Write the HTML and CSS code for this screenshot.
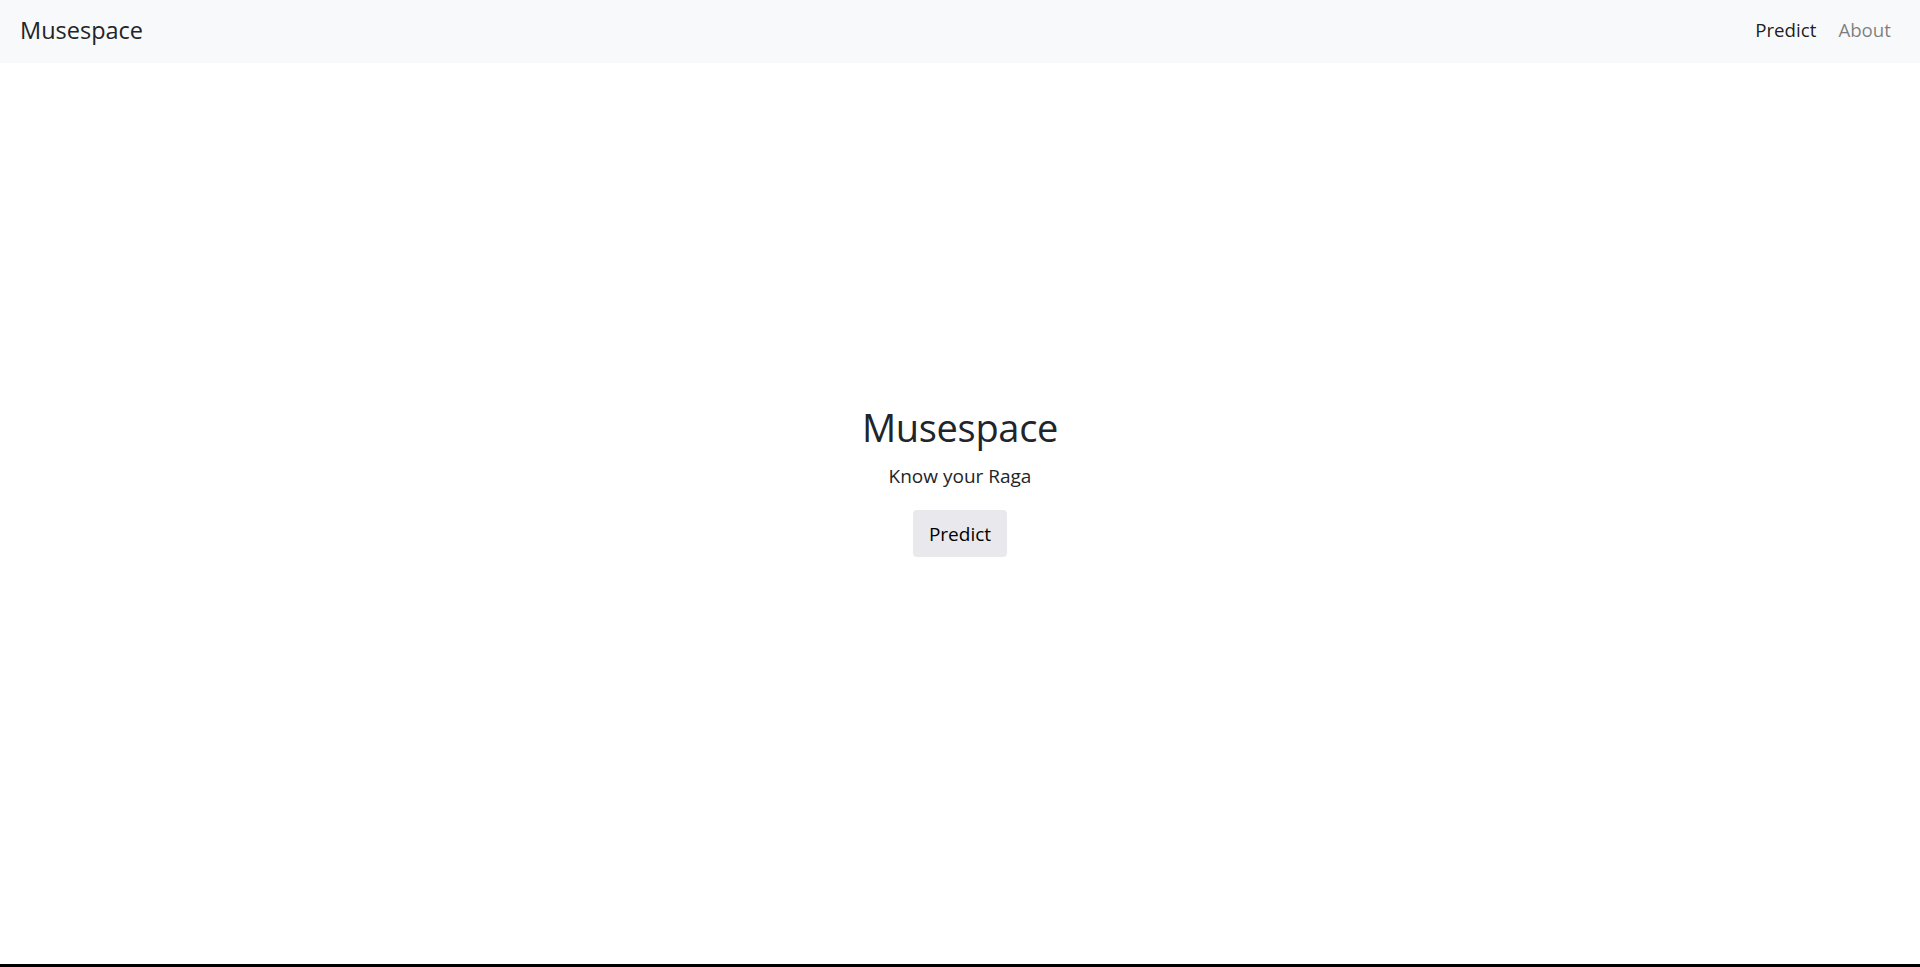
FILE: index.html
```html
<!DOCTYPE html>
<html lang="en">
<head>
<meta charset="utf-8">
<title>Musespace</title>
<link rel="stylesheet" href="styles.css">
</head>
<body>
<nav class="navbar">
  <a class="brand" href="#">Musespace</a>
  <ul class="nav">
    <li><a class="nav-link active" href="#">Predict</a></li>
    <li><a class="nav-link" href="#">About</a></li>
  </ul>
</nav>
<main class="main">
  <section class="hero">
    <h1 class="title">Musespace</h1>
    <p class="lead">Know your Raga</p>
    <button class="btn" type="button">Predict</button>
  </section>
</main>
<div class="bottom-bar"></div>
</body>
</html>
```

FILE: styles.css
```css
html, body {
  margin: 0;
  padding: 0;
}

body {
  min-height: 100vh;
  display: flex;
  flex-direction: column;
  font-family: "Open Sans", "Noto Sans", sans-serif;
  color: #212529;
  background: #ffffff;
}

.navbar {
  height: 63px;
  box-sizing: border-box;
  background: #f8f9fa;
  display: flex;
  align-items: center;
  justify-content: space-between;
  padding: 0 29px 3px 20px;
}

.brand {
  font-size: 23.5px;
  line-height: 36px;
  color: #212529;
  text-decoration: none;
}

.nav {
  list-style: none;
  margin: 0;
  padding: 0;
  display: flex;
  gap: 22px;
}

.nav-link {
  font-size: 18.7px;
  line-height: 28px;
  color: rgba(0, 0, 0, 0.5);
  text-decoration: none;
}

.nav-link.active {
  color: rgba(0, 0, 0, 0.9);
}

.main {
  flex: 1;
  display: flex;
  align-items: center;
  justify-content: center;
}

.hero {
  display: flex;
  flex-direction: column;
  align-items: center;
  padding-bottom: 68px;
}

.title {
  margin: 0 0 10px;
  font-size: 38px;
  font-weight: 400;
  line-height: 48px;
  letter-spacing: -0.3px;
}

.lead {
  margin: 0 0 19px;
  font-size: 19px;
  line-height: 30px;
}

.btn {
  font-family: "Open Sans", "Noto Sans", sans-serif;
  font-size: 19px;
  line-height: 29px;
  padding: 10px 16px 8px;
  border: none;
  border-radius: 4px;
  background: #e9e9ed;
  color: #000000;
}

.bottom-bar {
  height: 3px;
  background: #000000;
}
```
